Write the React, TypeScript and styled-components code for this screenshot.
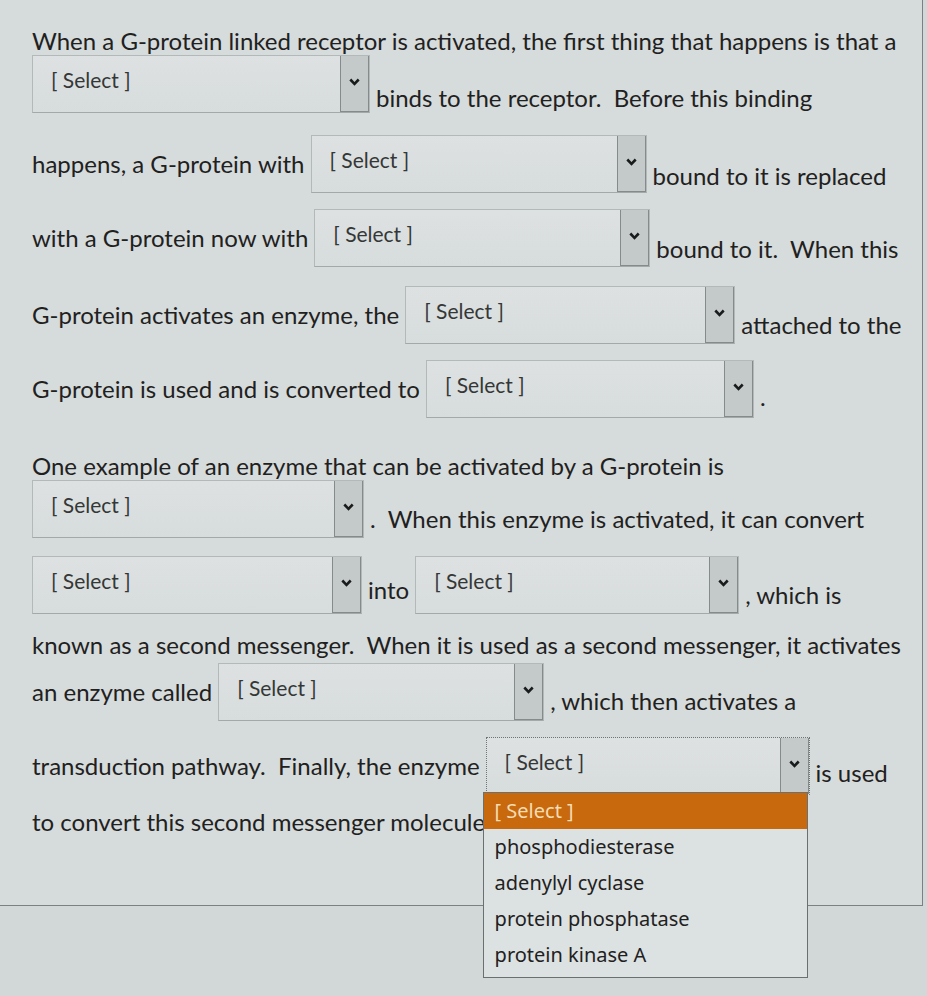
import React from 'react';
import styled, { createGlobalStyle } from 'styled-components';

const GlobalStyle = createGlobalStyle`
  body {
    margin: 0;
    background: #d2d7d7;
    font-family: Lato, "Open Sans", sans-serif;
    color: #1f2121;
  }
`;

const Page = styled.div`
  min-height: 996px;
`;

const Card = styled.div`
  position: relative;
  width: 890px;
  padding: 27px 0 68px 32px;
  background: #d6dbdb;
  border-right: 1px solid #7b8181;
  border-bottom: 1px solid #7b8181;
`;

const Row = styled.div<{ $mt: number; $h: number }>`
  display: flex;
  align-items: center;
  gap: 6px;
  margin-top: ${({ $mt }) => $mt}px;
  height: ${({ $h }) => $h}px;
  font-size: 24px;
  line-height: 28px;
`;

const Words = styled.span<{ $drop?: number }>`
  white-space: pre;
  padding-top: ${({ $drop }) => ($drop || 0) * 2}px;
`;

const SelectBox = styled.div<{ $w: number; $open?: boolean }>`
  position: relative;
  display: flex;
  flex: none;
  width: ${({ $w }) => $w}px;
  height: 58px;
  box-sizing: border-box;
  border: 1px ${({ $open }) => ($open ? 'dotted #6f7474' : 'solid #b3b9b9')};
  border-bottom-color: ${({ $open }) => ($open ? '#6f7474' : '#a3a9a9')};
  background: linear-gradient(#dde1e1, #d7dcdc);
`;

const SelectLabel = styled.div`
  flex: 1;
  display: flex;
  align-items: center;
  padding: 0 0 8px 18px;
  font-size: 21px;
  color: #353737;
`;

const ArrowButton = styled.div`
  width: 27px;
  display: flex;
  align-items: center;
  justify-content: center;
  padding-bottom: 4px;
  background: #c4c9c9;
  border-left: 1px solid #858b8b;
  border-right: 1px solid #858b8b;
  border-bottom: 1px solid #858b8b;
`;

const ListBox = styled.ul`
  position: absolute;
  top: 54px;
  left: -4px;
  width: 325px;
  margin: 0;
  padding: 0 0 4px;
  list-style: none;
  box-sizing: border-box;
  background: #dce1e1;
  border: 1px solid #6a6f6f;
  z-index: 2;
`;

const Option = styled.li<{ $active?: boolean }>`
  height: 36px;
  display: flex;
  align-items: center;
  padding-left: 11px;
  font-family: "Noto Sans", "DejaVu Sans", sans-serif;
  font-size: 20px;
  color: ${({ $active }) => ($active ? '#f4dcb4' : '#1f2121')};
  background: ${({ $active }) => ($active ? '#c8690d' : 'transparent')};
`;

const Chevron = () => (
  <svg width="11" height="8" viewBox="0 0 11 8">
    <path d="M1.3 1.5 L5.5 5.8 L9.7 1.5" fill="none" stroke="#1a1c1c" strokeWidth="2.6" />
  </svg>
);

const options = ['phosphodiesterase', 'adenylyl cyclase', 'protein phosphatase', 'protein kinase A'];

const Select: React.FC<{ w: number; open?: boolean }> = ({ w, open }) => (
  <SelectBox $w={w} $open={open}>
    <SelectLabel>[ Select ]</SelectLabel>
    <ArrowButton>
      <Chevron />
    </ArrowButton>
    {open && (
      <ListBox>
        <Option $active>[ Select ]</Option>
        {options.map((o) => (
          <Option key={o}>{o}</Option>
        ))}
      </ListBox>
    )}
  </SelectBox>
);

export default function App() {
  return (
    <Page>
      <GlobalStyle />
      <Card>
        <Row $mt={0} $h={28}>
          <Words>When a G-protein linked receptor is activated, the first thing that happens is that a</Words>
        </Row>
        <Row $mt={0} $h={58}>
          <Select w={338} />
          <Words $drop={14}>binds to the receptor.  Before this binding</Words>
        </Row>
        <Row $mt={22} $h={58}>
          <Words>happens, a G-protein with</Words>
          <Select w={336} />
          <Words $drop={12}>bound to it is replaced</Words>
        </Row>
        <Row $mt={16} $h={58}>
          <Words>with a G-protein now with</Words>
          <Select w={336} />
          <Words $drop={11}>bound to it.  When this</Words>
        </Row>
        <Row $mt={19} $h={58}>
          <Words>G-protein activates an enzyme, the</Words>
          <Select w={330} />
          <Words $drop={10}>attached to the</Words>
        </Row>
        <Row $mt={16} $h={58}>
          <Words>G-protein is used and is converted to</Words>
          <Select w={328} />
          <Words $drop={8}>.</Words>
        </Row>
        <Row $mt={33} $h={29}>
          <Words>One example of an enzyme that can be activated by a G-protein is</Words>
        </Row>
        <Row $mt={0} $h={58}>
          <Select w={332} />
          <Words $drop={10}>.  When this enzyme is activated, it can convert</Words>
        </Row>
        <Row $mt={18} $h={58}>
          <Select w={330} />
          <Words $drop={5}>into</Words>
          <Select w={324} />
          <Words $drop={10}>, which is</Words>
        </Row>
        <Row $mt={16} $h={30}>
          <Words>known as a second messenger.  When it is used as a second messenger, it activates</Words>
        </Row>
        <Row $mt={3} $h={58}>
          <Words>an enzyme called</Words>
          <Select w={326} />
          <Words $drop={9}>, which then activates a</Words>
        </Row>
        <Row $mt={16} $h={58}>
          <Words>transduction pathway.  Finally, the enzyme</Words>
          <Select w={324} open />
          <Words $drop={7}>is used</Words>
        </Row>
        <Row $mt={12} $h={30}>
          <Words>to convert this second messenger molecule</Words>
        </Row>
      </Card>
    </Page>
  );
}
